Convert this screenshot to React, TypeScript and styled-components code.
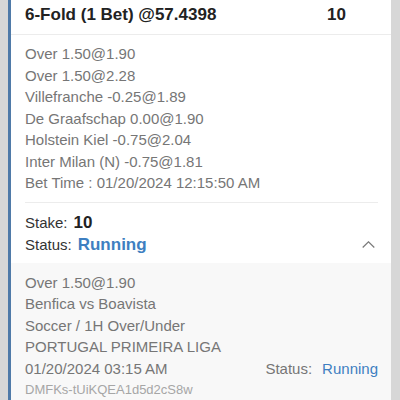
import React from 'react';
import styled, { createGlobalStyle } from 'styled-components';

const GlobalStyle = createGlobalStyle`
  html, body {
    margin: 0;
    padding: 0;
    background: #d7d7d7;
  }
  body {
    font-family: 'Liberation Sans', Arial, sans-serif;
  }
`;

const Page = styled.div`
  padding: 0 9px 0 8px;
  height: 400px;
  overflow: hidden;
`;

const Card = styled.div`
  background: #ffffff;
  border-left: 3px solid #4f7aa8;
`;

const Header = styled.div`
  box-sizing: border-box;
  display: flex;
  align-items: center;
  height: 35px;
  padding: 0 45px 5px 14px;
  border-bottom: 1px solid #ececec;
`;

const Title = styled.div`
  flex: 1;
  font-size: 17px;
  font-weight: 700;
  color: #222;
`;

const Amount = styled.div`
  font-size: 17px;
  font-weight: 700;
  color: #222;
`;

const Legs = styled.div`
  margin: 0 13px 0 14px;
  padding: 8px 0 8px;
  border-bottom: 1px solid #ececec;
`;

const Line = styled.div<{ $small?: boolean }>`
  font-size: ${(p) => (p.$small ? '13px' : '15px')};
  line-height: 21.5px;
  color: ${(p) => (p.$small ? '#a6a6a6' : '#767676')};
  white-space: nowrap;
`;

const Summary = styled.div`
  padding: 9px 13px 7px 14px;
`;

const SummaryRow = styled.div`
  display: flex;
  align-items: center;
  height: 22px;
  gap: 6px;
  font-size: 15px;
  color: #333;
`;

const Value = styled.span<{ $blue?: boolean }>`
  font-size: 17px;
  font-weight: 700;
  color: ${(p) => (p.$blue ? '#3e7fc1' : '#222')};
`;

const Chevron = styled.svg`
  margin-left: auto;
  margin-right: 3px;
`;

const Detail = styled.div`
  background: #f8f8f8;
  padding: 9px 13px 0 14px;
  height: 200px;
`;

const SplitLine = styled(Line)`
  display: flex;
  justify-content: space-between;
`;

const StatusInline = styled.span`
  display: flex;
  gap: 10px;
`;

const Running = styled.span`
  color: #3e7fc1;
`;

const legs = [
  'Over 1.50@1.90',
  'Over 1.50@2.28',
  'Villefranche -0.25@1.89',
  'De Graafschap 0.00@1.90',
  'Holstein Kiel -0.75@2.04',
  'Inter Milan (N) -0.75@1.81',
  'Bet Time : 01/20/2024 12:15:50 AM',
];

export default function App() {
  return (
    <Page>
      <GlobalStyle />
      <Card>
        <Header>
          <Title>6-Fold (1 Bet) @57.4398</Title>
          <Amount>10</Amount>
        </Header>
        <Legs>
          {legs.map((l) => (
            <Line key={l}>{l}</Line>
          ))}
        </Legs>
        <Summary>
          <SummaryRow>
            Stake: <Value>10</Value>
          </SummaryRow>
          <SummaryRow>
            Status: <Value $blue>Running</Value>
            <Chevron width="13" height="7" viewBox="0 0 13 7">
              <path d="M0.7 6.5 L6.5 0.8 L12.3 6.5" fill="none" stroke="#7a7a7a" strokeWidth="1.2" />
            </Chevron>
          </SummaryRow>
        </Summary>
        <Detail>
          <Line>Over 1.50@1.90</Line>
          <Line>Benfica vs Boavista</Line>
          <Line>Soccer / 1H Over/Under</Line>
          <Line>PORTUGAL PRIMEIRA LIGA</Line>
          <SplitLine>
            <span>01/20/2024 03:15 AM</span>
            <StatusInline>
              Status: <Running>Running</Running>
            </StatusInline>
          </SplitLine>
          <Line $small>DMFKs-tUiKQEA1d5d2cS8w</Line>
        </Detail>
      </Card>
    </Page>
  );
}
